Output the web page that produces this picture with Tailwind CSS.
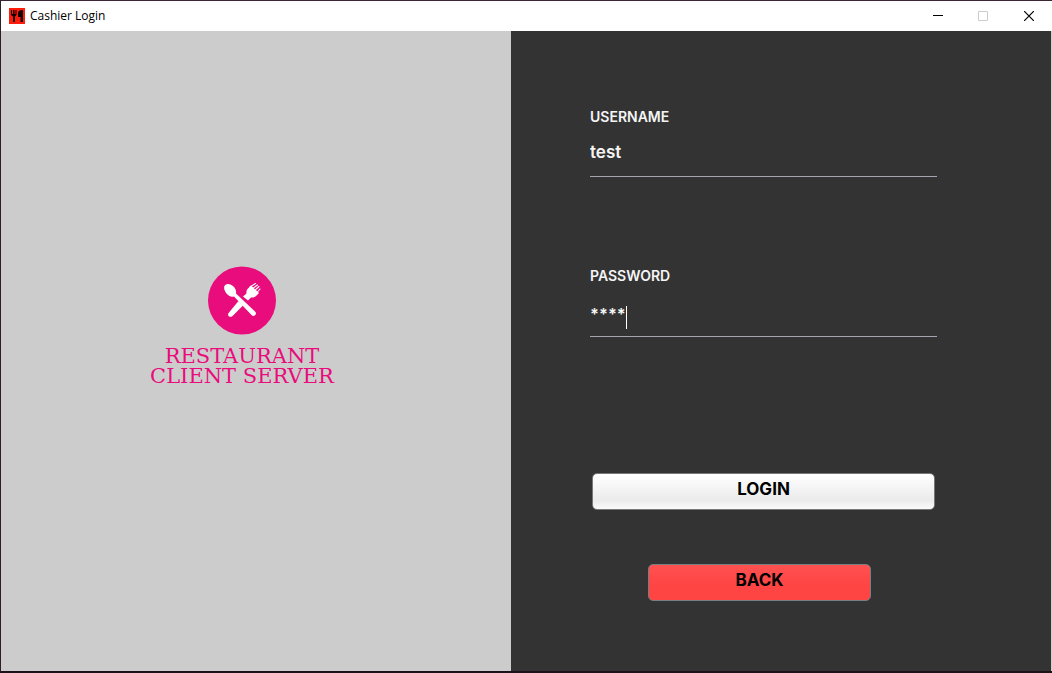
<!DOCTYPE html>
<html lang="en">
<head>
<meta charset="utf-8">
<meta name="viewport" content="width=device-width, initial-scale=1">
<title>Cashier Login</title>
<script src="https://cdn.jsdelivr.net/npm/@tailwindcss/browser@4"></script>
</head>
<body class="flex min-h-screen flex-col border-t border-b-2 border-l border-t-[#3a2733] border-b-[#1c1119] border-l-[#2d2024] bg-[#333333] font-['Inter',sans-serif]">
<header class="flex h-[30px] shrink-0 items-center bg-white pr-px pl-2 text-black">
  <svg class="mr-[5px] size-4" viewBox="0 0 16 16" aria-hidden="true">
    <path fill="#ff1c0a" d="M0 0h16v16H0z"/>
    <path fill="#120000" d="M2 2h1v4h1V2h1.500v4h1V2h1v5L6 8.500V14H4V8.500L2 7zM14 2v12h-2.500V9H9V5c0-2 2-3 5-3z"/>
  </svg>
  <h1 class="grow font-['Open_Sans',sans-serif] text-xs">Cashier Login</h1>
  <button type="button" aria-label="Minimize" class="grid h-full w-[45px] place-items-center"><svg class="size-[10px]" viewBox="0 0 10 10"><path d="M0 4.500h10" stroke="#000"/></svg></button>
  <button type="button" aria-label="Maximize" disabled class="grid h-full w-[46px] place-items-center"><svg class="size-[10px]" viewBox="0 0 10 10"><path d="M.5.5h9v9h-9z" fill="none" stroke="#ccc"/></svg></button>
  <button type="button" aria-label="Close" class="grid h-full w-[45px] place-items-center"><svg class="size-[10px]" viewBox="0 0 10 10"><path d="m0 0 10 10M10 0 0 10" stroke="#000" stroke-width="1.200"/></svg></button>
</header>
<main class="grid grow grid-cols-[510fr_540fr] border-r border-[#d0d0d0]">
  <section class="flex flex-col items-center bg-[#cccccc] pt-[234px] pr-7 text-[#e90c7c]">
    <svg class="mb-[11px] size-[70px]" viewBox="0 0 70 70" aria-hidden="true">
      <circle cx="35" cy="35.500" r="34" fill="currentColor"/>
      <g fill="#fff" stroke="#fff">
        <path stroke="none" d="M17.500 21c2-3 6-2.500 9 .5 2 2 3 4.500 2.500 7L48 46.500c1.500 1.500 1.200 3-.2 4-1.200.7-2.300.5-3.300-.5L27 31.500c-3 .8-5.500-.5-7.500-3-2-2.500-3-5.500-2-7.500z"/>
        <path stroke="none" d="m36 31.500 3.500-3c-.4-2 .2-3.600 1.500-5l3-3 8 7.500-3 3c-1.500 1.300-3.200 1.700-5 1.500l-3 3zM31.500 36l4.500 4.500L25.500 51c-1 1-2.600 1.200-3.700.2-1-1-1-2.500.2-3.700z"/>
        <path stroke-width="1.100" stroke-linecap="round" fill="none" d="m43 22 5.500-3.500M45 24l5.500-4M47 26l5-4.500M49.500 28l3.500-4"/>
      </g>
    </svg>
    <p class="text-center font-['DejaVu_Serif',serif] text-[21px] leading-5">RESTAURANT<br>CLIENT SERVER</p>
  </section>
  <form class="flex flex-col bg-[#333333] pt-[76px] pr-[114px] pl-[79px] text-[#f5f5f5]" onsubmit="return false">
    <label for="username" class="text-sm leading-5 font-semibold">USERNAME</label>
    <input id="username" type="text" value="test" class="h-[50px] w-full border-b border-[#a5a5b0] bg-transparent text-[17px] font-semibold outline-none">
    <label for="password" class="mt-[89px] text-sm leading-5 font-semibold">PASSWORD</label>
    <div class="relative">
      <input id="password" type="text" autocomplete="off" value="****" class="h-[51px] w-full border-b border-[#a5a5b0] bg-transparent pt-[6px] text-base font-bold outline-none">
      <span class="absolute top-5 left-9 h-[23px] w-px bg-white" aria-hidden="true"></span>
    </div>
    <button type="submit" class="mx-[2px] mt-[136px] flex h-[37px] justify-center rounded-[5px] border border-[#777] bg-linear-to-b from-white via-[#ebebeb] via-75% to-[#fafafa] pt-[3px] text-[17px] leading-6 font-bold text-black">LOGIN</button>
    <button type="button" class="mt-[54px] mr-[66px] ml-[58px] flex h-[37px] justify-center rounded-[5px] border border-[#777f82] bg-linear-to-b from-[#ff5050] to-[#ff4444] to-60% pt-[3px] text-[17px] leading-6 font-bold text-black">BACK</button>
  </form>
</main>
</body>
</html>
